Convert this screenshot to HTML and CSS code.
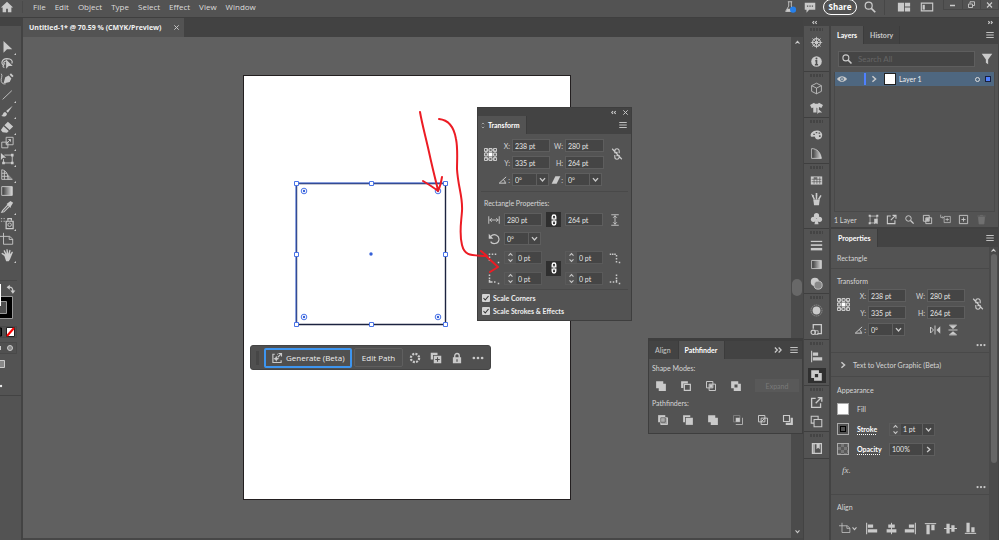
FILE: index.html
```html
<!DOCTYPE html>
<html lang="en">
<head>
<meta charset="utf-8">
<title>Untitled-1</title>
<link rel="stylesheet" href="styles.css">
</head>
<body>
<svg class="sprite" aria-hidden="true">
  <defs>
    <linearGradient id="fade"><stop offset="0" stop-color="#333"/><stop offset="1" stop-color="#d8d8d8"/></linearGradient>
  </defs>
  <symbol id="home" viewBox="0 0 16 16"><path class="f" d="M8 2 1 8.500h2V14h4v-4h2v4h4V8.500h2z"/></symbol>
  <symbol id="flask" viewBox="0 0 16 16"><path class="l" d="M5.500 2h5M6.500 2v5L3 13h9.500L9.500 7V2"/><path class="f" d="M5 10h6l1.500 3H3.500z"/><circle cx="11.500" cy="11" r="3.500" fill="#2680eb"/></symbol>
  <symbol id="chat" viewBox="0 0 16 16"><path class="f" d="M2 3h12v8H7l-3 3.500V11H2z"/><path class="k" d="M4.500 7h1.500M7.300 7h1.500M10 7h1.500" stroke-width="1.500"/></symbol>
  <symbol id="search" viewBox="0 0 16 16"><circle class="l" cx="6.500" cy="6.500" r="4" stroke-width="1.400"/><path class="l" d="m9.500 9.500 4.500 4.500" stroke-width="2"/></symbol>
  <symbol id="spaces" viewBox="0 0 16 16"><path class="f" d="M1 3h7v10H1zM9 3h6v4.500H9zM9 8.500h6V13H9z"/></symbol>
  <symbol id="frame" viewBox="0 0 16 16"><path class="l" d="M1.500 3.500h13v9h-13z" stroke-width="1.300"/><path class="f" d="M3 5.500h2.500V11H3z"/></symbol>
  <symbol id="min" viewBox="0 0 16 16"><path class="l" d="M3 9h10" stroke-width="3"/></symbol>
  <symbol id="restore" viewBox="0 0 16 16"><path class="l" d="M5 5V1.500h9V9h-4M2 6h8v7H2z" stroke-width="1.800"/></symbol>
  <symbol id="x" viewBox="0 0 16 16"><path class="l" d="m3 3 10 10M13 3 3 13" stroke-width="2.200"/></symbol>
  <symbol id="dbl" viewBox="0 0 16 16"><path class="l" d="m3 4 4 4-4 4M9 4l4 4-4 4" stroke-width="2"/></symbol>
  <symbol id="dblleft" viewBox="0 0 16 16"><path class="l" d="M7 5 4 8l3 3m6-6-3 3 3 3" stroke-width="2.500"/></symbol>
  <symbol id="dblright" viewBox="0 0 16 16"><path class="l" d="m3 5 3 3-3 3m6-6 3 3-3 3" stroke-width="2.500"/></symbol>
  <symbol id="menu" viewBox="0 0 16 16"><path class="l" d="M2 4h12M2 8h12M2 12h12" stroke-width="1.500"/></symbol>
  <symbol id="down" viewBox="0 0 16 16"><path class="l" d="m3.500 5.500 4.500 5 4.500-5" stroke-width="2.400"/></symbol>
  <symbol id="up" viewBox="0 0 16 16"><path class="l" d="m3.500 10.500 4.500-5 4.500 5" stroke-width="2.400"/></symbol>
  <symbol id="right" viewBox="0 0 16 16"><path class="l" d="m5.500 3.500 5 4.500-5 4.500" stroke-width="2.400"/></symbol>
  <symbol id="updown" viewBox="0 0 16 28"><path class="l" d="m3 9 5-5 5 5M3 19l5 5 5-5" stroke-width="2.600"/></symbol>
  <symbol id="dots" viewBox="0 0 16 16"><circle class="f" cx="2.500" cy="8" r="1.800"/><circle class="f" cx="8" cy="8" r="1.800"/><circle class="f" cx="13.500" cy="8" r="1.800"/></symbol>
  <symbol id="arrow" viewBox="0 0 16 16"><path class="f" d="M4 1v13.500l4-4h6z"/></symbol>
  <symbol id="lasso" viewBox="0 0 16 16"><path class="l" d="M5 13c-2 0-2-2-.500-2.500C1 10 1 3.500 8 3c5 0 7 3 5.500 5.500M6 9.500C2.500 8 5 5.500 8 5.500" stroke-width="1.300"/><path class="f" d="M7 4v10.500l3-3h4.500z"/></symbol>
  <symbol id="pen" viewBox="0 0 16 16"><path class="l" d="M1.500 2c2 3-1 5 0 9 1 2.500 3 3 5 2.500"/><path class="f" d="m4 13 2-7 4-2 3 3.500-2 4zM11 3l1.500-1.500 3 3L14 6z"/></symbol>
  <symbol id="line" viewBox="0 0 16 16"><path class="l" d="M3 13 13.500 3"/></symbol>
  <symbol id="brush" viewBox="0 0 16 16"><path class="f" d="M14.500 2 7 8l2 2zM6 9c-3 0-2 4-5 4.500 4 2 7 0 7-2.500z"/></symbol>
  <symbol id="eraser" viewBox="0 0 16 16"><path class="f" d="m9 2 6 5.500-4 4L5 6zM4 7l6 5.500-2 2-5-.500-2-2.500z"/></symbol>
  <symbol id="scale" viewBox="0 0 16 16"><path class="l" d="M7 1.500h8V10H7zM2 7h7v6.500H2z"/><path class="l" d="m7 9 5-5M9.500 4H12v2.500"/></symbol>
  <symbol id="free" viewBox="0 0 16 16"><path class="l" d="M5 3.500h9v9H4V8"/><path class="f" d="M1 1v8l2.500-2.500H7zM12.500 2h3v3h-3zM12.500 11h3v3h-3zM2.500 11h3v3h-3z"/></symbol>
  <symbol id="persp" viewBox="0 0 16 16"><path class="l" d="M2 2v11h12M2 2c6 1 7 6 7 11M5 3v10M2 6h6M2 9.500h8"/><path class="f" opacity=".5" d="m8 6 7 7H9z"/></symbol>
  <symbol id="grad" viewBox="0 0 16 16"><path d="M2 3h12v10H2z" fill="url(#fade)" stroke="#d0d0d0"/></symbol>
  <symbol id="dropper" viewBox="0 0 16 16"><path class="l" d="M9 5.500 3 12l-1 2 2.500-.500L11 7" stroke-width="1.300"/><path class="f" d="m7.500 4.500 1.500-1 3-2.500 3 2-2.500 4L12 9z"/></symbol>
  <symbol id="spray" viewBox="0 0 16 16"><path class="l" d="M7 6h8v8.500H7zM9 5V3h4v2" stroke-width="1.400"/><circle class="l" cx="11" cy="10" r="2"/><path class="l" d="M1 3h1.500M4 3h1.500M1 6h1.500M4 6h1.500"/></symbol>
  <symbol id="board" viewBox="0 0 16 16"><path class="l" d="M4 1v4M0 5h11l3.500 3v6H4V5M10.500 5v3.500h4"/></symbol>
  <symbol id="hand" viewBox="0 0 16 16"><path class="f" d="M5 9 1.500 6.500l1-1L6 7.500 4 3l1.300-.700L7.500 6.500 7.300 1.500h1.400L9.500 6.500l1.300-4.500 1.300.500-.800 4.500 2.500-3 1 .800-3.300 8L10 15H7z"/></symbol>
  <symbol id="swap" viewBox="0 0 16 16"><path class="l" d="M4 5c5-1 7 2 7 7" stroke-width="2"/><path class="f" d="M6 1v8L1 5zM7 10.500h8L11 15.500z"/></symbol>
  <symbol id="wheel" viewBox="0 0 16 16"><circle class="l" cx="8" cy="8" r="4.800" stroke-width="1.500"/><circle class="f" cx="8" cy="8" r="2"/><path class="l" d="M8 1v14M1 8h14M3 3l10 10M13 3 3 13"/></symbol>
  <symbol id="info" viewBox="0 0 16 16"><circle class="f" cx="8" cy="8" r="6.500"/><path class="k" d="M6.500 7H8v5M6 12h4" stroke-width="2"/><circle cx="8" cy="4.200" r="1.200" fill="#505050"/></symbol>
  <symbol id="cube" viewBox="0 0 16 16"><path class="l" d="m8 1.500 6 3v7l-6 3-6-3v-7zM2 4.500l6 3 6-3M8 7.500v7"/></symbol>
  <symbol id="shirt" viewBox="0 0 16 16"><path class="f" d="M5 2 0 5l2 4 2-1v6h4V8l3 3V7.500l3 1L16 5l-5-3c-1 2-5 2-6 0z"/><path class="f" d="M9 9v7l2-2h4z"/></symbol>
  <symbol id="palette" viewBox="0 0 16 16"><path class="f" fill-rule="evenodd" d="M8.500 3C3 3 0 7 1 10c1 2 4-.500 5 1s1 3 4 3 5-2.500 5-5.500S12 3 8.500 3zM4 7h2v1.500H4zM7 5h2v1.500H7zM10.500 5.500h2V7h-2zM11 9h2v2h-2z"/></symbol>
  <symbol id="guide" viewBox="0 0 16 16"><path d="M2 2c7 0 11 5 12 12H2z" fill="url(#fade)" stroke="#d0d0d0"/></symbol>
  <symbol id="swatch" viewBox="0 0 16 16"><path class="f" d="M1 3h14v10H1z"/><path class="k" d="M2 6.500h12M2 9.500h12M5 4v8M8.500 4v8M12 4v8" stroke-width=".8"/><path d="M5 4h3.500v2.500H5z" fill="#666"/></symbol>
  <symbol id="brushes" viewBox="0 0 16 16"><path class="f" d="M4 8h8l-1 7H5z"/><path class="l" d="M5.500 8 3 3M8 8V3M10.500 8l3-5" stroke-width="1.800"/><path class="f" d="M7 0h2v4H7zM1.500 1 5 3.500 3 5z"/></symbol>
  <symbol id="club" viewBox="0 0 16 16"><circle class="f" cx="8" cy="4.500" r="3.200"/><circle class="f" cx="4.300" cy="9" r="3.200"/><circle class="f" cx="11.700" cy="9" r="3.200"/><path class="f" d="M7 8h2l1.500 7h-5z"/></symbol>
  <symbol id="lines" viewBox="0 0 16 16"><path class="l" d="M1 3h14" stroke-width="1.500"/><path class="l" d="M1 7.500h14" stroke-width="2"/><path class="l" d="M1 12.500h14" stroke-width="3"/></symbol>
  <symbol id="circles" viewBox="0 0 16 16"><circle class="f" cx="6" cy="6" r="5"/><circle cx="10" cy="10" r="5" fill="#888" stroke="#d0d0d0"/></symbol>
  <symbol id="sun" viewBox="0 0 16 16"><circle class="f" cx="8" cy="8" r="4.800"/><circle class="l" cx="8" cy="8" r="6.800" stroke-dasharray="1 1.600"/></symbol>
  <symbol id="styles" viewBox="0 0 16 16"><path class="l" d="M4 7V2h10v11H9" stroke-width="1.600"/><circle class="l" cx="4" cy="11.500" r="2.700" stroke-width="1.400"/><path class="l" d="M6 9.500h4V14H6z"/></symbol>
  <symbol id="al" viewBox="0 0 16 16"><path class="l" d="M2 1v14" stroke-width="1.300"/><path class="f" d="M3.500 3H10v4H3.500zM3.500 9H15v4H3.500z"/></symbol>
  <symbol id="ac" viewBox="0 0 16 16"><path class="l" d="M8 1v14" stroke-width="1.300"/><path class="f" d="M4 3h8v4H4zM2 9h12v4H2z"/></symbol>
  <symbol id="ar" viewBox="0 0 16 16"><path class="l" d="M14 1v14" stroke-width="1.300"/><path class="f" d="M6 3h6.500v4H6zM1 9h11.500v4H1z"/></symbol>
  <symbol id="at" viewBox="0 0 16 16"><path class="l" d="M1 2h14" stroke-width="1.300"/><path class="f" d="M3 3.500h4V15H3zM9 3.500h4V10H9z"/></symbol>
  <symbol id="am" viewBox="0 0 16 16"><path class="l" d="M0 8h16" stroke-width="1.300"/><path class="f" d="M3 2h4v12H3zM9 4h4v8H9z"/></symbol>
  <symbol id="ab" viewBox="0 0 16 16"><path class="l" d="M1 14h14" stroke-width="1.300"/><path class="f" d="M3 1h4v11.500H3zM9 6.500h4v6H9z"/></symbol>
  <symbol id="unite" viewBox="0 0 16 16"><path class="f" d="M1.500 1.500H11V5h3.500v9.500H5V11H1.500z"/></symbol>
  <symbol id="minus" viewBox="0 0 16 16"><path class="f" d="M1.500 1.500h9v3H4.500v6h-3z"/><path class="l" d="M5.800 5.800h8v8h-8z" stroke-width="1.600"/></symbol>
  <symbol id="inter" viewBox="0 0 16 16"><path class="l" d="M2 2h8.500v8.500H2zM5.500 5.500H14V14H5.500z" stroke-width="1.300"/><path class="f" d="M6 6h4v4H6z"/></symbol>
  <symbol id="excl" viewBox="0 0 16 16"><path class="f" fill-rule="evenodd" d="M1.500 1.500H11V5h3.500v9.500H5V11H1.500zM6 6v4h4V6z"/></symbol>
  <symbol id="divide" viewBox="0 0 16 16"><path class="f" d="M1.500 1.500H11V11H1.500z"/><path d="M5 5h9v9H5z" fill="#aaa" stroke="#e0e0e0"/><path class="k" d="M5 11V5h6v6z"/></symbol>
  <symbol id="trim" viewBox="0 0 16 16"><path class="f" d="M1.500 1.500H11V4H4v7H1.500z"/><path class="f" d="M5 5h9.500v9.500H5z"/></symbol>
  <symbol id="crop" viewBox="0 0 16 16"><path d="M2 2h8.500v8.500H2z" fill="none" stroke="#888"/><path class="l" d="M5 14h9V5"/><path class="f" d="M5 5h5.500v5.500H5z"/></symbol>
  <symbol id="outline" viewBox="0 0 16 16"><path class="l" d="M2 2h8.500v8.500H2zM5.500 5.500H14V14H5.500zM5.500 10.500l5-5" stroke-width="1.300"/></symbol>
  <symbol id="back" viewBox="0 0 16 16"><path class="f" d="M11.500 5h3v9.500H5v-3h6.500z"/><path class="l" d="M2 2h8v8H2z" stroke-width="1.500"/></symbol>
  <symbol id="export" viewBox="0 0 16 16"><path class="l" d="M7 3H2v11h11V9" stroke-width="1.600"/><path class="l" d="m7 9 6.500-6.500M9.500 2h5v5" stroke-width="1.600"/></symbol>
  <symbol id="boards" viewBox="0 0 16 16"><path class="l" d="M5 10H1.500V1.500H10V5M5 5.500h9.500v9H5z" stroke-width="1.300"/></symbol>
  <symbol id="lib" viewBox="0 0 16 16"><path class="l" d="M3 2h11v12H3zM5 2v12" stroke-width="1.600"/><path class="f" d="M8 2h4v7l-2-2-2 2z"/></symbol>
  <symbol id="eye" viewBox="0 0 16 16"><path class="f" d="M0 8c4-6 12-6 16 0-4 6-12 6-16 0z"/><circle cx="8" cy="8" r="3" fill="#4e6a85"/><circle class="f" cx="8" cy="8" r="1.400"/></symbol>
  <symbol id="filter" viewBox="0 0 16 16"><path class="f" d="M1 1h14L9.500 8.500V15l-3-2V8.500z"/></symbol>
  <symbol id="pick" viewBox="0 0 16 16"><path class="l" d="M3 3h10v10H3z"/><path class="f" d="M1 1h3v3H1zM12 1h3v3h-3zM1 12h3v3H1zM9 7h5v8l-2.500-2L9 15z"/></symbol>
  <symbol id="newsub" viewBox="0 0 16 16"><path class="l" d="M6 3.500h9v9H6zM10.500 5.500v5M8 8h5M1 1v4h4M3.500 3.500 5 5 3.500 6.500"/></symbol>
  <symbol id="plus" viewBox="0 0 16 16"><path class="l" d="M2 2h12v12H2zM8 5v6M5 8h6" stroke-width="1.300"/></symbol>
  <symbol id="trash" viewBox="0 0 16 16"><path d="M2 3h12M6 2h4M3.500 4.500h9l-1 10h-7z" fill="#707070" stroke="#707070"/></symbol>
  <symbol id="ref" viewBox="0 0 26 26"><g class="l" stroke-width="2"><path d="M4 4h18v18H4z" stroke-dasharray="2 1"/><path d="M1 1h6v6H1zM10 1h6v6h-6zM19 1h6v6h-6zM1 10h6v6H1zM19 10h6v6h-6zM1 19h6v6H1zM10 19h6v6h-6zM19 19h6v6h-6z"/></g><path fill="#fff" d="M9 9h8v8H9z"/></symbol>
  <symbol id="unlink" viewBox="0 0 16 16"><path class="l" d="M5.500 7V4.500a2.500 2.500 0 0 1 5 0V7M5.500 9v2.500a2.500 2.500 0 0 0 5 0V9M8 5.500v5M2.500 2l11 12" stroke-width="1.300"/></symbol>
  <symbol id="link" viewBox="0 0 16 16"><path d="M6 7.500V4.300a2 2 0 0 1 4 0v3.200M6 8.500v3.200a2 2 0 0 0 4 0V8.500M8 5.500v5" fill="none" stroke="#fff" stroke-width="1.600"/></symbol>
  <symbol id="angle" viewBox="0 0 16 16"><path class="l" d="M13 3 2 13h11M8.500 7.500c2 1 3 3 3 5.500" stroke-width="1.600"/></symbol>
  <symbol id="shear" viewBox="0 0 16 16"><path class="f" d="M7 2h8L9 14H1z"/></symbol>
  <symbol id="wide" viewBox="0 0 16 16"><path class="l" d="M1 3v10M15 3v10M2 8h12M5 5.500 2.500 8 5 10.500M11 5.500 13.500 8 11 10.500" stroke-width="1.200"/></symbol>
  <symbol id="tall" viewBox="0 0 16 16"><path class="l" d="M3 1h10M3 15h10M8 2v12M5.500 5 8 2.500 10.500 5M5.500 11 8 13.500l2.500-2.500" stroke-width="1.200"/></symbol>
  <symbol id="rotate" viewBox="0 0 16 16"><path class="l" d="M3.500 4.500c5-5 12-.500 11 5-1 5.500-9 6-11 2" stroke-width="1.500"/><path class="f" d="M1 1v6.500h6z"/></symbol>
  <symbol id="ctl" viewBox="0 0 16 16"><path class="f" d="M1 2h2v2H1zM5 2h2v2H5zM9 2h2v2H9zM1 6h2v2H1zM1 10h2v2H1zM13 13h2v2h-2z"/></symbol>
  <symbol id="ctr" viewBox="0 0 16 16"><path class="f" d="M1 2h2v2H1zM4 2h2v2H4zM7 2h2v2H7zM9 4h2v2H9zM9 8h2v2H9zM9 12h2v2H9zM13 13h2v2h-2z"/></symbol>
  <symbol id="cbl" viewBox="0 0 16 16"><path class="f" d="M1 2h2v2H1zM1 6h2v2H1zM1 9h2v4H1zM3 11h3v2H3zM8 11h2v2H8zM13 13h2v2h-2z"/></symbol>
  <symbol id="cbr" viewBox="0 0 16 16"><path class="f" d="M9 2h2v2H9zM9 6h2v2H9zM9 9h2v4H9zM5 11h2v2H5zM1 11h2v2H1zM13 13h2v2h-2z"/></symbol>
  <symbol id="fliph" viewBox="0 0 16 16"><path class="l" d="M2 4v8l4-4zM8 2v12" stroke-width="1.300"/><path class="f" d="M15 3v10l-5-5z"/></symbol>
  <symbol id="flipv" viewBox="0 0 16 16"><path class="f" d="M3 2h10L8 6.500zM3 14h10L8 9.500z"/><path class="l" d="M2 8h12M3 1.500h10M3 14.500h10" stroke-width="1.300"/></symbol>
  <symbol id="gen" viewBox="0 0 16 16"><path class="l" d="M5 3H2.500v11h11v-3M8 3h1" stroke-width="1.500"/><path class="l" d="m9 7 4-4M10 2h4v4" stroke-width="1.500"/><path class="f" d="m7 5 1.200 2.800L11 9l-2.800 1.200L7 13l-1.200-2.800L3 9l2.800-1.200z"/></symbol>
  <symbol id="recolor" viewBox="0 0 16 16"><circle class="l" cx="8" cy="8" r="5.500" stroke-width="3" stroke-dasharray="2.700 1.600"/></symbol>
  <symbol id="dup" viewBox="0 0 16 16"><path class="f" d="M1 1h9v3H4v6H1z"/><path class="f" fill-rule="evenodd" d="M5 5h10v10H5zm4.300 2v2.300H7v1.400h2.300V13h1.400v-2.300H13V9.300h-2.300V7z"/></symbol>
  <symbol id="lock" viewBox="0 0 16 16"><path class="l" d="M5 8V5a3 3 0 0 1 6 0v3" stroke-width="1.800"/><path class="f" fill-rule="evenodd" d="M2.500 7h11v8h-11zm4.700 2.500V13h1.600V9.500z"/></symbol>
  <symbol id="check" viewBox="0 0 16 16"><path d="m3 8 3.500 4L13 4" fill="none" stroke="#333" stroke-width="2.200"/></symbol>
</svg>

<header class="topbar">
  <button class="ib" aria-label="Home"><svg class="i14"><use href="#home"/></svg></button>
  <nav class="menus">
    <a href="#">File</a><a href="#">Edit</a><a href="#">Object</a><a href="#">Type</a><a href="#">Select</a><a href="#">Effect</a><a href="#">View</a><a href="#">Window</a>
  </nav>
  <div class="actions">
    <button class="ib" aria-label="Beta features"><svg class="i14"><use href="#flask"/></svg></button>
    <button class="ib" aria-label="Comments"><svg class="i14"><use href="#chat"/></svg></button>
    <button class="share">Share</button>
    <button class="ib" aria-label="Search"><svg class="i14"><use href="#search"/></svg></button>
  </div>
  <div class="spaces">
    <button class="ib" aria-label="Arrange documents"><svg class="i14"><use href="#spaces"/></svg></button>
    <button class="ib" aria-label="Workspaces"><svg class="i14"><use href="#frame"/></svg></button>
  </div>
  <div class="winbtns">
    <button aria-label="Minimize"><svg><use href="#min"/></svg></button><button aria-label="Restore"><svg><use href="#restore"/></svg></button><button aria-label="Close"><svg><use href="#x"/></svg></button>
  </div>
</header>

<div class="workspace">
  <aside class="tools">
    <div class="strip"></div>
    <div class="toolgrid">
      <button class="t more" aria-label="Selection"><svg><use href="#arrow"/></svg></button>
      <button class="t" aria-label="Lasso"><svg><use href="#lasso"/></svg></button>
      <button class="t" aria-label="Curvature"><svg><use href="#pen"/></svg></button>
      <button class="t more" aria-label="Line"><svg><use href="#line"/></svg></button>
      <button class="t more" aria-label="Brush"><svg><use href="#brush"/></svg></button>
      <button class="t more" aria-label="Eraser"><svg><use href="#eraser"/></svg></button>
      <button class="t more" aria-label="Scale"><svg><use href="#scale"/></svg></button>
      <button class="t more" aria-label="Free transform"><svg><use href="#free"/></svg></button>
      <button class="t more" aria-label="Perspective"><svg><use href="#persp"/></svg></button>
      <button class="t" aria-label="Gradient"><svg><use href="#grad"/></svg></button>
      <button class="t more" aria-label="Eyedropper"><svg><use href="#dropper"/></svg></button>
      <button class="t more" aria-label="Symbol sprayer"><svg><use href="#spray"/></svg></button>
      <button class="t" aria-label="Artboard"><svg><use href="#board"/></svg></button>
      <button class="t more" aria-label="Hand"><svg><use href="#hand"/></svg></button>
    </div>
    <svg class="colors" viewBox="0 0 21 110">
      <path d="M0 .5h17" stroke="#494949"/>
      <svg x="6" y="4" width="10" height="10"><use href="#swap"/></svg>
      <path d="M-9 16.500h21.500v22H-9z" fill="#000" stroke="#999"/>
      <path d="M-4 21.500H6.500v12H-4z" fill="#505050" stroke="#999"/>
      <path d="M-9 4H1v22h-10z" fill="#fff"/>
      <path d="M-3 46.500H16.500v11H-3zM-3 62.500H16.500v11H-3z" fill="#505050" stroke="#494949"/>
      <path d="M-6 48H1.500v8H-6z" fill="#222" stroke="#000"/>
      <path d="M6.500 47.500h8v9h-8z" fill="#fff" stroke="#222"/><path d="m7 56 7-8" stroke="#f00" stroke-width="2"/>
      <circle cx="10" cy="68" r="2.500" fill="#888" stroke="#ccc"/><path d="M0 66v4" stroke="#ccc" stroke-width="2"/>
      <path d="M-4 80.500H4.500v7H-4z" fill="#888" stroke="#ccc"/>
      <circle cx="1" cy="106" r="1.200" fill="#eee"/>
    </svg>
    <div class="toolend"></div>
  </aside>

  <main class="doc">
    <div class="doctabs"><div class="doctab"><span>Untitled-1* @ 70.59 % (CMYK/Preview)</span><button class="ib" aria-label="Close document"><svg class="i7"><use href="#x"/></svg></button></div></div>
    <div class="stage">
      <div class="artboard"></div>
      <svg class="selection" viewBox="0 0 156 148" aria-label="Selected rectangle">
        <path d="M3.500 3.500h149v141H3.500z" fill="none" stroke="#1c2340" stroke-width="1.400"/>
        <path d="M3 144V3h149" fill="none" stroke="#4a74e8"/>
        <g fill="#fff" stroke="#4a74e8"><path d="M1.500 1.500h4v4h-4zM76.500 1.500h4v4h-4zM150.500 1.500h4v4h-4zM1.500 72.500h4v4h-4zM150.500 72.500h4v4h-4zM1.500 142.500h4v4h-4zM76.500 142.500h4v4h-4zM150.500 142.500h4v4h-4z"/>
        <circle cx="11" cy="11" r="2.800"/><circle cx="145" cy="11" r="2.800"/><circle cx="11" cy="137" r="2.800"/><circle cx="145" cy="137" r="2.800"/></g>
        <g fill="#3560d8"><circle cx="11" cy="11" r="1.200"/><circle cx="145" cy="11" r="1.200"/><circle cx="11" cy="137" r="1.200"/><circle cx="145" cy="137" r="1.200"/><circle cx="78" cy="74" r="1.700"/></g>
      </svg>

      <div class="taskbar">
        <span class="grip"></span>
        <button class="gen"><svg class="i12"><use href="#gen"/></svg>Generate (Beta)</button>
        <button class="edit">Edit Path</button>
        <div class="taskicons">
          <button class="ib" aria-label="Recolor"><svg class="i12"><use href="#recolor"/></svg></button>
          <button class="ib" aria-label="Duplicate"><svg class="i12"><use href="#dup"/></svg></button>
          <button class="ib" aria-label="Lock"><svg class="i12"><use href="#lock"/></svg></button>
          <button class="ib" aria-label="More options"><svg class="i12"><use href="#dots"/></svg></button>
        </div>
      </div>

      <div class="vscroll"><svg class="i7"><use href="#up"/></svg><span class="knob"></span><svg class="i7"><use href="#down"/></svg></div>

      <section class="float transform">
        <div class="floatbar"><svg class="i7"><use href="#dblleft"/></svg><svg class="i7"><use href="#x"/></svg></div>
        <div class="tabs"><div class="tab on"><svg class="tiny"><use href="#updown"/></svg>Transform</div><button class="ib end" aria-label="Panel menu"><svg class="i10"><use href="#menu"/></svg></button></div>
        <div class="tgrid">
          <svg class="refpt"><use href="#ref"/></svg>
          <label for="tx">X:</label><input id="tx" value="238 pt"><label for="tw">W:</label><input id="tw" value="280 pt">
          <svg class="i14 chain"><use href="#unlink"/></svg>
          <label for="ty">Y:</label><input id="ty" value="335 pt"><label for="th">H:</label><input id="th" value="264 pt">
          <label for="ta"><svg class="i10"><use href="#angle"/></svg>:</label><span class="combo"><select id="ta"><option>0°</option></select><svg><use href="#down"/></svg></span>
          <label for="ts"><svg class="i10"><use href="#shear"/></svg>:</label><span class="combo"><select id="ts"><option>0°</option></select><svg><use href="#down"/></svg></span>
        </div>
        <div class="rect">
          <h3>Rectangle Properties:</h3>
          <div class="rgrid">
            <svg class="i12"><use href="#wide"/></svg><input aria-label="Rectangle width" value="280 pt"><button class="linked" aria-label="Link size"><svg class="i14"><use href="#link"/></svg></button><input aria-label="Rectangle height" value="264 pt"><svg class="i12"><use href="#tall"/></svg>
            <svg class="i12"><use href="#rotate"/></svg><span class="combo"><select aria-label="Rectangle angle"><option>0°</option></select><svg><use href="#down"/></svg></span>
          </div>
          <div class="rgrid corners">
            <svg class="i12"><use href="#ctl"/></svg><span class="spin"><svg><use href="#updown"/></svg><input aria-label="Top left radius" value="0 pt"></span><button class="linked tallspan" aria-label="Link radii"><svg class="i14"><use href="#link"/></svg></button><span class="spin"><svg><use href="#updown"/></svg><input aria-label="Top right radius" value="0 pt"></span><svg class="i12"><use href="#ctr"/></svg>
            <svg class="i12"><use href="#cbl"/></svg><span class="spin"><svg><use href="#updown"/></svg><input aria-label="Bottom left radius" value="0 pt"></span><span class="spin"><svg><use href="#updown"/></svg><input aria-label="Bottom right radius" value="0 pt"></span><svg class="i12"><use href="#cbr"/></svg>
          </div>
        </div>
        <div class="checks">
          <label><input type="checkbox" checked><svg class="tick"><use href="#check"/></svg>Scale Corners</label>
          <label><input type="checkbox" checked><svg class="tick"><use href="#check"/></svg>Scale Strokes &amp; Effects</label>
        </div>
      </section>

      <section class="float pathfinder">
        <div class="tabs"><div class="tab">Align</div><div class="tab on">Pathfinder</div><span class="end pair"><svg class="i10"><use href="#dbl"/></svg><svg class="i10"><use href="#menu"/></svg></span></div>
        <div class="pfbody">
          <h3>Shape Modes:</h3>
          <div class="modes">
            <button class="ib" aria-label="Unite"><svg class="i12"><use href="#unite"/></svg></button><button class="ib" aria-label="Minus front"><svg class="i12"><use href="#minus"/></svg></button><button class="ib" aria-label="Intersect"><svg class="i12"><use href="#inter"/></svg></button><button class="ib" aria-label="Exclude"><svg class="i12"><use href="#excl"/></svg></button><button class="expand" disabled>Expand</button>
          </div>
          <h3>Pathfinders:</h3>
          <div class="finders">
            <button class="ib" aria-label="Divide"><svg class="i12"><use href="#divide"/></svg></button><button class="ib" aria-label="Trim"><svg class="i12"><use href="#trim"/></svg></button><button class="ib" aria-label="Merge"><svg class="i12"><use href="#unite"/></svg></button><button class="ib" aria-label="Crop"><svg class="i12"><use href="#crop"/></svg></button><button class="ib" aria-label="Outline"><svg class="i12"><use href="#outline"/></svg></button><button class="ib" aria-label="Minus back"><svg class="i12"><use href="#back"/></svg></button>
          </div>
        </div>
      </section>

      <svg class="ink" viewBox="0 0 90 170" aria-hidden="true">
        <path d="M5 4c2 12 6 26 9 40s6 26 9 38M8 73c5 3 10 6 15 10 2-4 3-8 4-14"/>
        <path d="M24 11c10 1 15 8 17 20 2 10 1 20 1 30 1 18 6 28 5 42s-3 22 0 34 10 10 24 11l12 11-8 5M66 143l6 5"/>
      </svg>
    </div>
  </main>

  <aside class="dock">
    <div class="strip"><svg class="i7"><use href="#dblleft"/></svg></div>
    <div class="group"><button aria-label="Navigator"><svg><use href="#wheel"/></svg></button><button aria-label="Info"><svg><use href="#info"/></svg></button></div>
    <div class="group"><button aria-label="3D"><svg><use href="#cube"/></svg></button><button aria-label="Mockup"><svg><use href="#shirt"/></svg></button></div>
    <div class="group"><button aria-label="Color"><svg><use href="#palette"/></svg></button><button aria-label="Color guide"><svg><use href="#guide"/></svg></button></div>
    <div class="group"><button aria-label="Swatches"><svg><use href="#swatch"/></svg></button><button aria-label="Brushes"><svg><use href="#brushes"/></svg></button><button aria-label="Symbols"><svg><use href="#club"/></svg></button></div>
    <div class="group"><button aria-label="Stroke"><svg><use href="#lines"/></svg></button><button aria-label="Gradient panel"><svg><use href="#grad"/></svg></button><button aria-label="Transparency"><svg><use href="#circles"/></svg></button></div>
    <div class="group"><button aria-label="Appearance"><svg><use href="#sun"/></svg></button><button aria-label="Graphic styles"><svg><use href="#styles"/></svg></button></div>
    <div class="group"><button aria-label="Align"><svg><use href="#al"/></svg></button><button class="active" aria-label="Pathfinder"><svg><use href="#excl"/></svg></button></div>
    <div class="group"><button aria-label="Asset export"><svg><use href="#export"/></svg></button><button aria-label="Artboards"><svg><use href="#boards"/></svg></button></div>
    <div class="group"><button aria-label="Libraries"><svg><use href="#lib"/></svg></button></div>
  </aside>

  <aside class="panels">
    <div class="strip"><svg class="i7"><use href="#dblright"/></svg></div>
    <section class="layers">
      <div class="tabs"><div class="tab on">Layers</div><div class="tab">History</div><button class="ib end" aria-label="Panel menu"><svg class="i10"><use href="#menu"/></svg></button></div>
      <div class="find"><label class="searchbox"><svg class="i12"><use href="#search"/></svg><input type="text" placeholder="Search All" aria-label="Search all layers"></label><svg class="i12"><use href="#filter"/></svg></div>
      <div class="list">
        <div class="layer"><svg class="i10"><use href="#eye"/></svg><span class="bar"></span><svg class="i10"><use href="#right"/></svg><span class="thumb"></span><span class="name">Layer 1</span><span class="target"></span><span class="picked"></span></div>
      </div>
      <div class="foot"><span>1 Layer</span><div class="footicons"><svg><use href="#pick"/></svg><svg><use href="#export"/></svg><svg><use href="#search"/></svg><svg><use href="#inter"/></svg><svg><use href="#newsub"/></svg><svg><use href="#plus"/></svg><svg><use href="#trash"/></svg></div></div>
    </section>
    <section class="props">
      <div class="tabs"><div class="tab on">Properties</div><button class="ib end" aria-label="Panel menu"><svg class="i10"><use href="#menu"/></svg></button></div>
      <div class="scroller">
        <div class="sections">
          <div class="kind">Rectangle</div>
          <div class="sec">
            <h3>Transform</h3>
            <div class="tgrid">
              <svg class="refpt"><use href="#ref"/></svg>
              <label for="px">X:</label><input id="px" value="238 pt"><label for="pw">W:</label><input id="pw" value="280 pt">
              <svg class="i14 chain"><use href="#unlink"/></svg>
              <label for="py">Y:</label><input id="py" value="335 pt"><label for="ph">H:</label><input id="ph" value="264 pt">
              <label for="pa"><svg class="i10"><use href="#angle"/></svg>:</label><span class="combo"><select id="pa"><option>0°</option></select><svg><use href="#down"/></svg></span>
              <span></span><span class="flips"><svg class="i12"><use href="#fliph"/></svg><svg class="i12"><use href="#flipv"/></svg></span>
            </div>
            <svg class="i10 moredots"><use href="#dots"/></svg>
          </div>
          <div class="vector"><svg class="i10"><use href="#right"/></svg>Text to Vector Graphic (Beta)</div>
          <div class="sec looks">
            <h3>Appearance</h3>
            <div class="arow"><span class="sw white"></span><span>Fill</span></div>
            <div class="arow"><span class="sw black"></span><label class="u" for="st">Stroke</label><span class="spin wide"><svg><use href="#updown"/></svg><span class="combo"><select id="st"><option>1 pt</option></select><svg><use href="#down"/></svg></span></span></div>
            <div class="arow"><span class="sw checker"></span><label class="u" for="op">Opacity</label><span class="combo pct"><input id="op" value="100%"><svg><use href="#right"/></svg></span></div>
            <div class="arow fxrow">fx.</div>
            <svg class="i10 moredots"><use href="#dots"/></svg>
          </div>
          <div class="sec last">
            <h3>Align</h3>
            <div class="aligns"><span class="pair"><svg class="i12"><use href="#board"/></svg><svg class="i7"><use href="#down"/></svg></span><svg class="i14"><use href="#al"/></svg><svg class="i14"><use href="#ac"/></svg><svg class="i14"><use href="#ar"/></svg><svg class="i14"><use href="#at"/></svg><svg class="i14"><use href="#am"/></svg><svg class="i14"><use href="#ab"/></svg></div>
          </div>
        </div>
        <div class="pscroll"><svg class="i7"><use href="#up"/></svg><span></span></div>
      </div>
    </section>
  </aside>
</div>
</body>
</html>
```
FILE: styles.css
```css
* { box-sizing: border-box; }
body {
  margin: 0; height: 100vh; display: flex; flex-direction: column; overflow: hidden;
  background: #535353; color: #d6d6d6; font: 7px/10px Lato, "Open Sans", sans-serif;
}
svg { display: block; flex: none; overflow: hidden; }
.sprite { position: absolute; width: 0; height: 0; }
.f { fill: #cacaca; }
.l { fill: none; stroke: #cacaca; }
.k { fill: none; stroke: #505050; }
.i7 { width: 7px; height: 7px; }
.i10 { width: 10px; height: 10px; }
.i12 { width: 12px; height: 12px; }
.i14 { width: 14px; height: 14px; }
.tiny { width: 4px; height: 7px; }
button { font: inherit; color: inherit; background: none; border: 0; padding: 0; margin: 0; }
.ib { display: flex; flex: none; }
h3 { margin: 0; font-size: 7px; font-weight: 400; line-height: 10px; }
input, select { font: inherit; color: #e6e6e6; margin: 0; min-width: 0; width: 100%; outline: 0; border-radius: 0; }
select { appearance: none; }

.topbar { height: 18px; flex: none; display: flex; align-items: center; padding-bottom: 4px; border-bottom: 1px solid #3f3f3f; font: 8px/12px "Open Sans", sans-serif; }
.menus { display: flex; gap: 9px; margin-left: 8px; padding-left: 10px; border-left: 1px solid #4a4a4a; }
.menus a { color: #dcdcdc; text-decoration: none; }
.actions { display: flex; align-items: center; gap: 6px; margin-left: auto; padding-right: 7px; border-right: 1px solid #474747; }
.share { font-weight: 700; color: #fff; border: 1px solid #fff; border-radius: 8px; padding: 1px 0; width: 34px; }
.spaces { display: flex; gap: 9px; padding: 0 9px 0 12px; }
.winbtns { display: flex; align-self: flex-start; border: 1px solid #474747; border-top: 0; }
.winbtns button { width: 18px; height: 9px; padding: 0 4px; }
.winbtns button + button { border-left: 1px solid #474747; }
.winbtns svg { width: 9px; height: 8px; }

.workspace { flex: 1; min-height: 0; display: flex; }
.strip { height: 8px; flex: none; background: #434343; display: flex; align-items: center; justify-content: flex-end; padding-right: 4px; }
.tools { width: 23px; flex: none; border-right: 2px solid #434343; overflow: hidden; }
.toolgrid { padding-top: 13px; }
.t { display: flex; align-items: center; width: 17px; height: 16px; }
.t svg { width: 14px; height: 14px; }
.more::after { content: ""; align-self: flex-end; border: 1px solid #ccc; border-top-color: transparent; border-left-color: transparent; }
.colors { width: 21px; height: 110px; margin-top: 17px; }
.toolend { border-top: 1px solid #434343; margin-top: 5px; }

.doc { flex: 1; min-width: 0; display: flex; flex-direction: column; }
.doctabs { height: 19px; flex: none; background: #424242; display: flex; }
.doctab { display: flex; align-items: center; gap: 12px; padding: 0 4px 0 6px; background: #535353; color: #f0f0f0; font: 700 7px/12px "Open Sans", sans-serif; }
.stage { position: relative; flex: 1; background: #606060; border-bottom: 2px solid #474747; }
.artboard { position: absolute; left: 220px; top: 38px; width: 328px; height: 425px; background: #fff; border: 1px solid #231f20; }
.selection { position: absolute; left: 270px; top: 143px; width: 156px; height: 148px; }
.ink { position: absolute; left: 392px; top: 71px; width: 90px; height: 170px; fill: none; stroke: #ec1c24; stroke-width: 2; stroke-linecap: round; stroke-linejoin: round; pointer-events: none; }
.vscroll { position: absolute; right: 0; top: 0; bottom: 0; width: 12px; background: #4b4b4b; display: flex; flex-direction: column; align-items: center; justify-content: space-between; padding: 2px 0 3px; }
.knob { width: 10px; height: 17px; border-radius: 5px; background: #686868; }

.taskbar { position: absolute; left: 227px; top: 308px; display: flex; align-items: center; height: 25px; padding: 0 6px 0 5px; background: #505050; border: 1px solid #444; border-radius: 3px; font: 8px/12px "Open Sans", sans-serif; color: #eee; }
.grip { width: 3px; height: 14px; background: #464646; margin-right: 5px; }
.gen { display: flex; align-items: center; gap: 3px; height: 20px; width: 88px; padding-left: 5px; border: 2px solid #3d95f0; border-radius: 2px; white-space: nowrap; }
.edit { height: 19px; width: 49px; margin-left: 2px; border: 1px solid #5f5f5f; border-radius: 2px; white-space: nowrap; }
.taskicons { display: flex; gap: 9px; margin-left: 6px; }

.float { position: absolute; background: #535353; border: 1px solid #3e3e3e; }
.tabs { display: flex; align-items: center; height: 18px; background: #434343; }
.tab { height: 18px; display: flex; align-items: center; gap: 3px; padding: 0 7px; color: #c8c8c8; border-right: 1px solid #3c3c3c; font-weight: 700; }
.tab.on { background: #535353; color: #fff; }
.end { margin-left: auto; margin-right: 3px; }
.pair { display: flex; align-items: center; gap: 6px; }
.transform { left: 454px; top: 70px; width: 155px; }
.floatbar { height: 8px; background: #434343; display: flex; justify-content: flex-end; align-items: center; gap: 5px; padding-right: 2px; }
.transform .tab { padding: 0 6px 0 3px; }
.tgrid { display: grid; grid-template-columns: 14px 10px 38px 11px 39px 18px; grid-template-rows: repeat(3, 13px); gap: 4px 2px; align-items: center; padding: 5px 0 5px 6px; }
.tgrid label { display: flex; align-items: center; justify-content: flex-end; }
.tgrid > input, .rgrid > input, .searchbox { height: 13px; background: #454545; border: 1px solid #5e5e5e; padding: 0 2px; }
.refpt { width: 13px; height: 13px; grid-column: 1; grid-row: 1 / 3; }
.chain { grid-column: 6; grid-row: 1 / 3; justify-self: end; }
.tgrid > :nth-child(11) { grid-column: 2; }
.combo { display: grid; grid-template-columns: 1fr 12px; align-items: center; width: 37px; height: 13px; border: 1px solid #5e5e5e; background: #454545; }
.combo select, .combo input { grid-area: 1 / 1 / 2 / 3; height: 11px; padding: 0 2px; background: none; border: 0; }
.combo > svg { grid-area: 1 / 2; width: 12px; height: 11px; padding: 1px; border-left: 1px solid #5e5e5e; pointer-events: none; }
.rect { border-top: 1px solid #494949; margin: 0 3px; padding: 6px 0 3px 3px; }
.rgrid { display: grid; grid-template-columns: 12px 38px 15px 38px 14px; grid-template-rows: 15px 15px; gap: 4px; align-items: center; justify-items: start; padding: 4px 0 0 4px; }
.rgrid > svg { justify-self: end; }
.linked { width: 15px; height: 15px; background: #2f2f2f; display: flex; align-items: center; justify-content: center; }
.corners { row-gap: 6px; }
.tallspan { grid-column: 3; grid-row: 1 / 3; }
.spin { display: flex; align-items: center; height: 13px; width: 38px; border: 1px solid #5a5a5a; }
.spin > svg { width: 7px; height: 11px; margin: 0 2px; }
.spin > input { height: 11px; background: #454545; border: 0; padding: 0 2px; }
.checks { border-top: 1px solid #494949; margin: 0 3px; padding: 1px 0 3px 1px; display: grid; color: #eee; font-weight: 700; }
.checks label { display: grid; grid-template-columns: 8px 1fr; align-items: center; gap: 3px; height: 13px; }
.checks input { appearance: none; width: 8px; height: 8px; background: #d4d4d4; border-radius: 1px; grid-area: 1 / 1; }
.tick { width: 8px; height: 8px; grid-area: 1 / 1; pointer-events: none; }

.pathfinder { right: 0; top: 301px; width: 155px; border-top-width: 3px; }
.pathfinder .tab:not(.on) { font-weight: 400; }
.pathfinder .tab { padding: 0 7px 0 6px; }
.pfbody { padding: 4px 3px 2px; }
.modes, .finders { display: flex; align-items: center; height: 25px; gap: 13px; padding-left: 3px; }
.modes .expand { width: 47px; height: 13px; background: #595959; color: #797979; }
.finders { padding-left: 5px; height: 23px; }

.dock { width: 28px; flex: none; border: solid #434343; border-width: 0 2px 0 1px; }
.dock .strip { justify-content: center; }
.group { border-bottom: 1px solid #3f3f3f; display: flex; flex-direction: column; align-items: center; }
.group::before { content: ""; width: 13px; height: 3px; margin: 2px 0 2px; background: repeating-linear-gradient(90deg, #444 0 2px, #535353 2px 3px); }
.group button { width: 18px; height: 19px; display: flex; align-items: center; justify-content: center; }
.group svg { width: 13px; height: 13px; }
.group .active { background: #303030; height: 15px; margin: 2px 0; }

.panels { width: 168px; flex: none; display: flex; flex-direction: column; border-right: 1px solid #444; }
.layers { height: 203px; flex: none; display: flex; flex-direction: column; border-bottom: 2px solid #414141; }
.layers .tab { padding: 0 6px; }
.find { display: flex; align-items: center; gap: 6px; padding: 7px 5px 5px 7px; justify-content: space-between; }
.searchbox { flex: 1; height: 16px; display: flex; align-items: center; gap: 5px; }
.searchbox input { background: none; border: 0; padding: 0; font-size: 8px; }
.searchbox input::placeholder { color: #666; }
.list { flex: 1; margin: 0 3px; border: 1px solid #494949; border-top: 0; }
.layer { display: flex; align-items: center; height: 14px; background: #4e6780; color: #eee; padding: 0 3px 0 2px; }
.bar { width: 2px; height: 12px; background: #4f80ff; margin: 0 3px 0 17px; }
.thumb { width: 12px; height: 12px; margin: 0 3px 0 5px; background: #fff; border: 1px solid #222; }
.target { width: 5px; height: 5px; border: 1px solid #ddd; border-radius: 50%; margin-left: auto; margin-right: 5px; }
.picked { width: 6px; height: 6px; background: #4f80ff; border: 1px solid #182040; }
.foot { height: 15px; display: flex; align-items: center; padding-left: 3px; }
.footicons { display: flex; gap: 7px; margin-left: auto; margin-right: 11px; }
.footicons svg { width: 11px; height: 11px; }
.props { flex: 1; min-height: 0; display: flex; flex-direction: column; }
.props .tabs { flex: none; }
.scroller { flex: 1; min-height: 0; display: flex; }
.sections { flex: 1; overflow: hidden; }
.kind { height: 22px; padding: 6px 6px 0; border-bottom: 1px solid #494949; }
.sec { padding: 7px 3px 0 6px; border-bottom: 1px solid #494949; }
.sec .tgrid { grid-template-columns: 14px 13px 38px 17px 38px 18px; padding: 1px 0 2px; }
.flips { display: flex; gap: 6px; padding-left: 2px; }
.moredots { margin: 2px 0 2px auto; }
.vector { height: 24px; display: flex; align-items: center; gap: 5px; padding-left: 7px; border-bottom: 1px solid #494949; }
.sec h3 { height: 12px; }
.looks { padding-top: 8px; }
.looks h3 { height: 14px; }
.arow { display: flex; align-items: center; height: 20px; }
.sw { width: 12px; height: 12px; margin-right: 8px; border: 1px solid #aaa; }
.white { background: #fff; }
.black { background: #505050; border: 4px double #000; outline: 1px solid #aaa; outline-offset: -1px; }
.checker { background: repeating-conic-gradient(#777 0 25%, #5a5a5a 0 50%) 0 0 / 6px 6px; }
.u { width: 32px; color: #fff; font-weight: 700; text-decoration: underline dotted; text-underline-offset: 2px; }
.spin.wide { width: 46px; }
.spin .combo { flex: 1; border: 0; height: 11px; }
.pct { width: 46px; }
.fxrow { height: 21px; padding-left: 5px; font: italic 9px/12px "Liberation Serif", serif; }
.last { border: 0; }
.aligns { display: flex; align-items: center; justify-content: space-between; height: 28px; padding: 0 9px 0 2px; }
.aligns .i14 { width: 13px; height: 13px; }
.aligns .pair { gap: 0; }
.pscroll { width: 9px; background: #4a4a4a; display: flex; flex-direction: column; align-items: center; }
.pscroll span { width: 6px; height: 209px; background: #666; border-radius: 3px; }
```
